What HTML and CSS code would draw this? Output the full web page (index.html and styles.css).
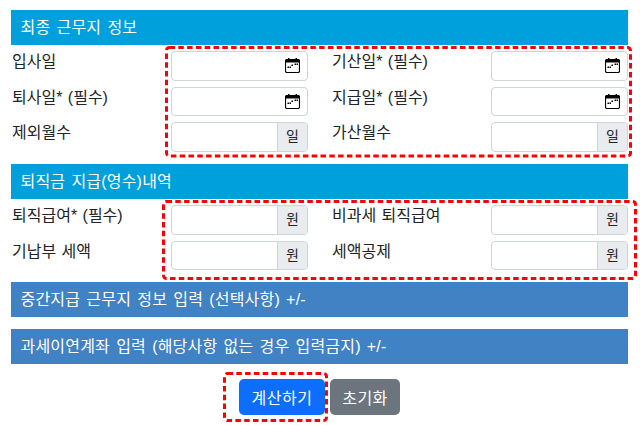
FILE: index.html
```html
<!DOCTYPE html>
<html lang="ko">
<head>
<meta charset="utf-8">
<title>퇴직금 계산</title>
<link rel="stylesheet" href="styles.css">
</head>
<body>
<svg class="defs" width="0" height="0" aria-hidden="true">
  <symbol id="calendar" viewBox="0 0 15 15">
    <rect x="0.5" y="1.500" width="14" height="13" rx="1.500" fill="#fff" stroke="#000" stroke-width="1.200"/>
    <path d="M1 1h13v3.500H1zM3 0h1.500v1H3zM10.500 0H12v1h-1.500z" fill="#000"/>
    <path d="M2.500 8.500H4V10H2.500zM4.500 8.500H6V10H4.500zM6.500 6.500H8V8H6.500zM9.500 5.500H11V7H9.500zM11.500 5.500H13V7h-1.500z" fill="#000"/>
  </symbol>
</svg>
<main class="page">
  <h2 class="bar bar-info">최종 근무지 정보</h2>
  <div class="grid">
    <label class="label">입사일</label>
    <div class="control"><input class="field" type="text"><svg class="cal"><use href="#calendar"/></svg></div>
    <label class="label label-right">기산일* (필수)</label>
    <div class="control"><input class="field" type="text"><svg class="cal"><use href="#calendar"/></svg></div>
    <label class="label">퇴사일* (필수)</label>
    <div class="control"><input class="field" type="text"><svg class="cal"><use href="#calendar"/></svg></div>
    <label class="label label-right">지급일* (필수)</label>
    <div class="control"><input class="field" type="text"><svg class="cal"><use href="#calendar"/></svg></div>
    <label class="label">제외월수</label>
    <div class="control"><input class="field" type="text"><span class="addon">일</span></div>
    <label class="label label-right">가산월수</label>
    <div class="control"><input class="field" type="text"><span class="addon">일</span></div>
  </div>

  <h2 class="bar bar-info">퇴직금 지급(영수)내역</h2>
  <div class="grid grid-pay">
    <label class="label">퇴직급여* (필수)</label>
    <div class="control"><input class="field" type="text"><span class="addon">원</span></div>
    <label class="label label-right">비과세 퇴직급여</label>
    <div class="control"><input class="field" type="text"><span class="addon">원</span></div>
    <label class="label">기납부 세액</label>
    <div class="control"><input class="field" type="text"><span class="addon">원</span></div>
    <label class="label label-right">세액공제</label>
    <div class="control"><input class="field" type="text"><span class="addon">원</span></div>
  </div>

  <h2 class="bar bar-blue">중간지급 근무지 정보 입력 (선택사항) +/-</h2>
  <h2 class="bar bar-blue">과세이연계좌 입력 (해당사항 없는 경우 입력금지) +/-</h2>

  <div class="actions">
    <button class="btn btn-primary" type="button">계산하기</button>
    <button class="btn btn-secondary" type="button">초기화</button>
  </div>

  <svg class="mark mark-dates"><rect class="mark-line" x="1.500" y="1.500" width="464" height="108.500" rx="3"/></svg>
  <svg class="mark mark-pay"><rect class="mark-line" x="1.500" y="1.500" width="472" height="77" rx="3"/></svg>
  <svg class="mark mark-submit"><rect class="mark-line" x="1.500" y="1.500" width="102" height="47" rx="3"/></svg>
</main>
</body>
</html>
```

FILE: styles.css
```css
* { box-sizing: border-box; }
html, body { margin: 0; background: #fff; }
body {
  font-family: "Liberation Sans", "Noto Sans CJK KR", sans-serif;
  font-size: 16px;
  letter-spacing: 0.2px;
  word-spacing: 1.500px;
  color: #212529;
}
.defs { position: absolute; }
.page {
  position: relative;
  width: 640px;
  height: 425px;
  padding: 10px 12px 0 11px;
  overflow: hidden;
}
.bar {
  height: 35px;
  margin: 0;
  padding: 0 9.500px;
  font-size: 16px;
  font-weight: 400;
  line-height: 35px;
  color: #fff;
}
.bar-info { background: #00a0dc; }
.bar-blue { background: #4082c4; margin-bottom: 12px; }
.grid {
  display: grid;
  grid-template-columns: 160px 137px 183px 137px;
  grid-auto-rows: 29.500px;
  row-gap: 6px;
  padding: 6px 0 12.500px;
}
.grid-pay { padding-bottom: 12px; }
.label { padding: 0 0 0 1px; line-height: 22px; letter-spacing: 0; word-spacing: 1px; }
.label-right { padding-left: 24px; }
.control {
  display: flex;
  align-items: stretch;
  border: 1px solid #ced4da;
  border-radius: 4px;
  background: #fff;
  overflow: hidden;
}
.field {
  flex: 1;
  min-width: 0;
  border: 0;
  padding: 0 8px;
  background: transparent;
  font: inherit;
  outline: none;
}
.cal { width: 15px; height: 15px; align-self: center; margin-right: 7px; flex: none; }
.addon {
  width: 30px;
  flex: none;
  text-align: center;
  line-height: 27px;
  font-size: 14px;
  letter-spacing: 0;
  background: #e9ecef;
  border-left: 1px solid #ced4da;
}
.actions {
  display: flex;
  justify-content: center;
  gap: 5px;
  padding-top: 3px;
}
.btn {
  height: 36px;
  border: 0;
  border-radius: 5px;
  padding: 0;
  font: inherit;
  letter-spacing: 0.5px;
  color: #fff;
}
.btn-primary { background: #0d6efd; width: 86px; }
.btn-secondary { background: #6c757d; width: 70px; }
.mark { position: absolute; pointer-events: none; }
.mark-line { fill: none; stroke: #f00; stroke-width: 3; stroke-dasharray: 5.500 3.300; }
.mark-dates { left: 165px; top: 46px; width: 467px; height: 112px; }
.mark-pay { left: 162px; top: 200px; width: 475px; height: 80px; }
.mark-submit { left: 223px; top: 372px; width: 105px; height: 50px; }
```
